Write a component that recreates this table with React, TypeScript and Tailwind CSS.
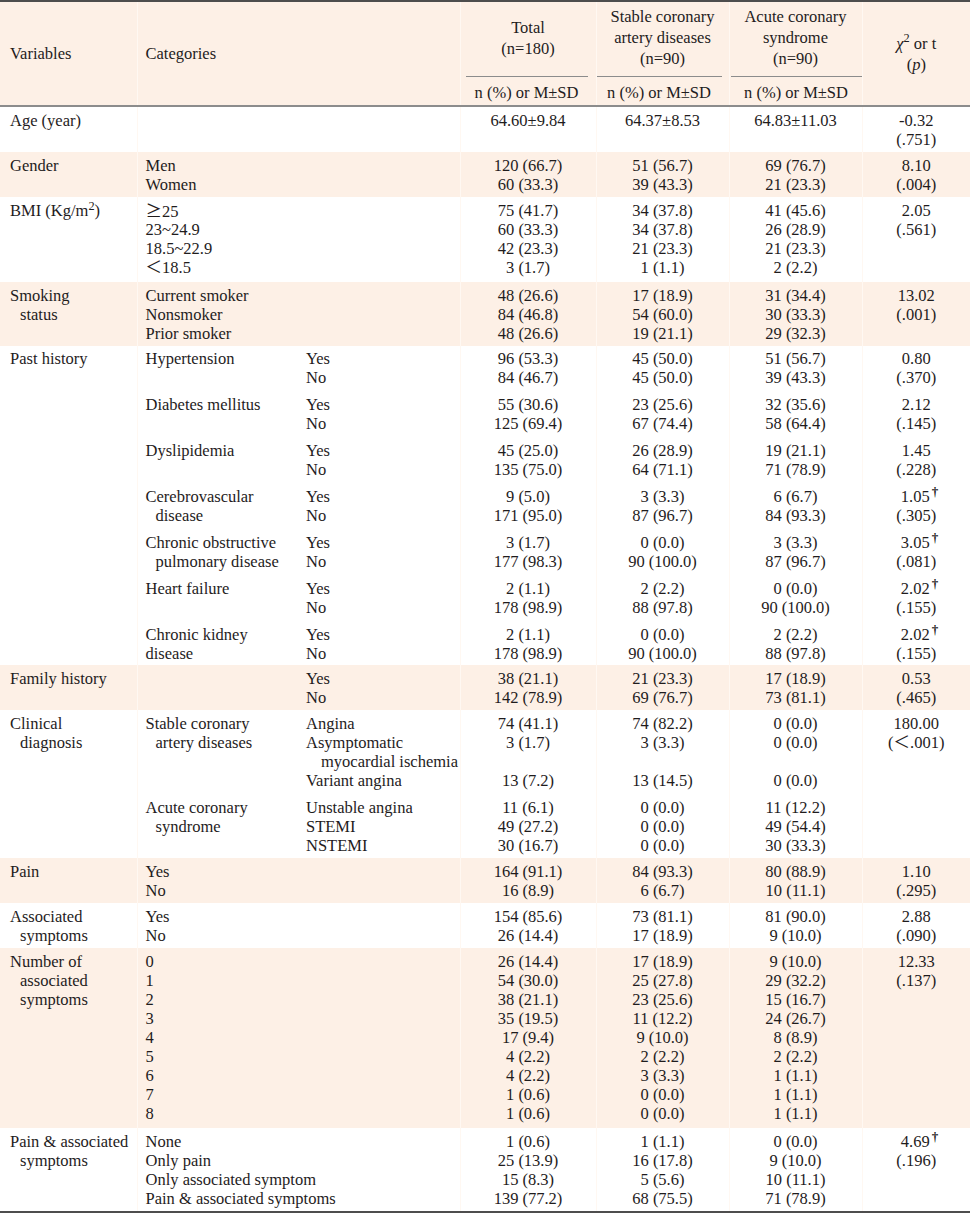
type Group = {
  c?: string[];
  s?: string[];
  t?: string[];
  a?: string[];
  b?: string[];
  p?: string[];
};

type Row = {
  shaded: boolean;
  pad?: 'tall' | 'tight';
  v: React.ReactNode[];
  groups: Group[];
};

const rows: Row[] = [
  {
    shaded: false,
    v: ['Age (year)'],
    groups: [{ t: ['64.60±9.84'], a: ['64.37±8.53'], b: ['64.83±11.03'], p: ['-0.32', '(.751)'] }],
  },
  {
    shaded: true,
    v: ['Gender'],
    groups: [
      {
        c: ['Men', 'Women'],
        t: ['120 (66.7)', '60 (33.3)'],
        a: ['51 (56.7)', '39 (43.3)'],
        b: ['69 (76.7)', '21 (23.3)'],
        p: ['8.10', '(.004)'],
      },
    ],
  },
  {
    shaded: false,
    pad: 'tall',
    v: [
      <span key="bmi">
        BMI (Kg/m<sup>2</sup>)
      </span>,
    ],
    groups: [
      {
        c: ['≥25', '23~24.9', '18.5~22.9', '＜18.5'],
        t: ['75 (41.7)', '60 (33.3)', '42 (23.3)', '3 (1.7)'],
        a: ['34 (37.8)', '34 (37.8)', '21 (23.3)', '1 (1.1)'],
        b: ['41 (45.6)', '26 (28.9)', '21 (23.3)', '2 (2.2)'],
        p: ['2.05', '(.561)'],
      },
    ],
  },
  {
    shaded: true,
    v: ['Smoking', '>status'],
    groups: [
      {
        c: ['Current smoker', 'Nonsmoker', 'Prior smoker'],
        t: ['48 (26.6)', '84 (46.8)', '48 (26.6)'],
        a: ['17 (18.9)', '54 (60.0)', '19 (21.1)'],
        b: ['31 (34.4)', '30 (33.3)', '29 (32.3)'],
        p: ['13.02', '(.001)'],
      },
    ],
  },
  {
    shaded: false,
    pad: 'tight',
    v: ['Past history'],
    groups: [
      {
        c: ['Hypertension'],
        s: ['Yes', 'No'],
        t: ['96 (53.3)', '84 (46.7)'],
        a: ['45 (50.0)', '45 (50.0)'],
        b: ['51 (56.7)', '39 (43.3)'],
        p: ['0.80', '(.370)'],
      },
      {
        c: ['Diabetes mellitus'],
        s: ['Yes', 'No'],
        t: ['55 (30.6)', '125 (69.4)'],
        a: ['23 (25.6)', '67 (74.4)'],
        b: ['32 (35.6)', '58 (64.4)'],
        p: ['2.12', '(.145)'],
      },
      {
        c: ['Dyslipidemia'],
        s: ['Yes', 'No'],
        t: ['45 (25.0)', '135 (75.0)'],
        a: ['26 (28.9)', '64 (71.1)'],
        b: ['19 (21.1)', '71 (78.9)'],
        p: ['1.45', '(.228)'],
      },
      {
        c: ['Cerebrovascular', '>disease'],
        s: ['Yes', 'No'],
        t: ['9 (5.0)', '171 (95.0)'],
        a: ['3 (3.3)', '87 (96.7)'],
        b: ['6 (6.7)', '84 (93.3)'],
        p: ['1.05†', '(.305)'],
      },
      {
        c: ['Chronic obstructive', '>pulmonary disease'],
        s: ['Yes', 'No'],
        t: ['3 (1.7)', '177 (98.3)'],
        a: ['0 (0.0)', '90 (100.0)'],
        b: ['3 (3.3)', '87 (96.7)'],
        p: ['3.05†', '(.081)'],
      },
      {
        c: ['Heart failure'],
        s: ['Yes', 'No'],
        t: ['2 (1.1)', '178 (98.9)'],
        a: ['2 (2.2)', '88 (97.8)'],
        b: ['0 (0.0)', '90 (100.0)'],
        p: ['2.02†', '(.155)'],
      },
      {
        c: ['Chronic kidney', 'disease'],
        s: ['Yes', 'No'],
        t: ['2 (1.1)', '178 (98.9)'],
        a: ['0 (0.0)', '90 (100.0)'],
        b: ['2 (2.2)', '88 (97.8)'],
        p: ['2.02†', '(.155)'],
      },
    ],
  },
  {
    shaded: true,
    v: ['Family history'],
    groups: [
      {
        s: ['Yes', 'No'],
        t: ['38 (21.1)', '142 (78.9)'],
        a: ['21 (23.3)', '69 (76.7)'],
        b: ['17 (18.9)', '73 (81.1)'],
        p: ['0.53', '(.465)'],
      },
    ],
  },
  {
    shaded: false,
    v: ['Clinical', '>diagnosis'],
    groups: [
      {
        c: ['Stable coronary', '>artery diseases'],
        s: ['Angina', 'Asymptomatic', '>>myocardial ischemia', 'Variant angina'],
        t: ['74 (41.1)', '3 (1.7)', '', '13 (7.2)'],
        a: ['74 (82.2)', '3 (3.3)', '', '13 (14.5)'],
        b: ['0 (0.0)', '0 (0.0)', '', '0 (0.0)'],
        p: ['180.00', '(＜.001)'],
      },
      {
        c: ['Acute coronary', '>syndrome'],
        s: ['Unstable angina', 'STEMI', 'NSTEMI'],
        t: ['11 (6.1)', '49 (27.2)', '30 (16.7)'],
        a: ['0 (0.0)', '0 (0.0)', '0 (0.0)'],
        b: ['11 (12.2)', '49 (54.4)', '30 (33.3)'],
      },
    ],
  },
  {
    shaded: true,
    v: ['Pain'],
    groups: [
      {
        c: ['Yes', 'No'],
        t: ['164 (91.1)', '16 (8.9)'],
        a: ['84 (93.3)', '6 (6.7)'],
        b: ['80 (88.9)', '10 (11.1)'],
        p: ['1.10', '(.295)'],
      },
    ],
  },
  {
    shaded: false,
    v: ['Associated', '>symptoms'],
    groups: [
      {
        c: ['Yes', 'No'],
        t: ['154 (85.6)', '26 (14.4)'],
        a: ['73 (81.1)', '17 (18.9)'],
        b: ['81 (90.0)', '9 (10.0)'],
        p: ['2.88', '(.090)'],
      },
    ],
  },
  {
    shaded: true,
    pad: 'tall',
    v: ['Number of', '>associated', '>symptoms'],
    groups: [
      {
        c: ['0', '1', '2', '3', '4', '5', '6', '7', '8'],
        t: ['26 (14.4)', '54 (30.0)', '38 (21.1)', '35 (19.5)', '17 (9.4)', '4 (2.2)', '4 (2.2)', '1 (0.6)', '1 (0.6)'],
        a: ['17 (18.9)', '25 (27.8)', '23 (25.6)', '11 (12.2)', '9 (10.0)', '2 (2.2)', '3 (3.3)', '0 (0.0)', '0 (0.0)'],
        b: ['9 (10.0)', '29 (32.2)', '15 (16.7)', '24 (26.7)', '8 (8.9)', '2 (2.2)', '1 (1.1)', '1 (1.1)', '1 (1.1)'],
        p: ['12.33', '(.137)'],
      },
    ],
  },
  {
    shaded: false,
    v: ['Pain & associated', '>symptoms'],
    groups: [
      {
        c: ['None', 'Only pain', 'Only associated symptom', 'Pain & associated symptoms'],
        t: ['1 (0.6)', '25 (13.9)', '15 (8.3)', '139 (77.2)'],
        a: ['1 (1.1)', '16 (17.8)', '5 (5.6)', '68 (75.5)'],
        b: ['0 (0.0)', '9 (10.0)', '10 (11.1)', '71 (78.9)'],
        p: ['4.69†', '(.196)'],
      },
    ],
  },
];

const groupSize = (g: Group) =>
  Math.max(g.c?.length ?? 0, g.s?.length ?? 0, g.t?.length ?? 0, g.a?.length ?? 0, g.b?.length ?? 0, g.p?.length ?? 0);

const Line = ({ text }: { text: React.ReactNode }) => {
  if (typeof text !== 'string') {
    return <div className="h-[19px] whitespace-nowrap">{text}</div>;
  }
  if (text.startsWith('>>')) {
    return <div className="h-[19px] whitespace-nowrap pl-[15px]">{text.slice(2)}</div>;
  }
  if (text.startsWith('>')) {
    return <div className="h-[19px] whitespace-nowrap pl-[10px]">{text.slice(1)}</div>;
  }
  if (text.startsWith('≥')) {
    return (
      <div className="h-[19px] whitespace-nowrap">
        <span className="font-['Noto_Sans_CJK_KR']">≥</span>
        {text.slice(1)}
      </div>
    );
  }
  if (text.endsWith('†')) {
    // dagger sits above the number without shifting its centre
    return (
      <div className="h-[19px] whitespace-nowrap">
        {text.slice(0, -1)}
        <span className="relative -top-[6px] inline-block w-0 pl-[2px] text-[13px] font-bold leading-none">†</span>
      </div>
    );
  }
  return <div className="h-[19px] whitespace-nowrap">{text || '\u00a0'}</div>;
};

const GroupCell = ({ groups, field }: { groups: Group[]; field: keyof Group }) => (
  <>
    {groups.map((g, gi) => {
      const n = groupSize(g);
      const lines = g[field] ?? [];
      return (
        <div key={gi} className={gi > 0 ? 'mt-[8px]' : ''}>
          {Array.from({ length: n }).map((_, i) => (
            <Line key={i} text={lines[i] ?? ''} />
          ))}
        </div>
      );
    })}
  </>
);

const sep = 'border-l border-[#fff8f2]';

const padFor = (pad?: 'tall' | 'tight') =>
  pad === 'tall' ? 'pt-[4px] pb-[5px]' : pad === 'tight' ? 'pt-[3px] pb-[2px]' : 'pt-[4px] pb-[3px]';

export default function App() {
  return (
    <div className="min-h-screen bg-white text-[#1f1c1d]" style={{ fontFamily: '"Liberation Serif", "Noto Sans CJK KR", serif' }}>
      <table className="w-[970px] table-fixed border-collapse border-t-2 border-b-2 border-[#4d4d4d] text-[16.5px] leading-[19px]">
        <colgroup>
          <col className="w-[137px]" />
          <col className="w-[161px]" />
          <col className="w-[162px]" />
          <col className="w-[136px]" />
          <col className="w-[133px]" />
          <col className="w-[133px]" />
          <col className="w-[108px]" />
        </colgroup>
        <thead className="border-b-2 border-[#8c8c8c] bg-[#fdf0e6]">
          <tr className="leading-[21px]">
            <th rowSpan={2} className="pl-[10px] text-left align-middle font-normal">
              Variables
            </th>
            <th rowSpan={2} colSpan={2} className={`pl-[8px] text-left align-middle font-normal ${sep}`}>
              Categories
            </th>
            <th className={`pt-[4px] pb-[7px] text-center align-middle font-normal ${sep}`}>
              <div>Total</div>
              <div>(n=180)</div>
            </th>
            <th className={`pt-[4px] pb-[7px] text-center align-middle font-normal ${sep}`}>
              <div>Stable coronary</div>
              <div>artery diseases</div>
              <div>(n=90)</div>
            </th>
            <th className={`pt-[4px] pb-[7px] text-center align-middle font-normal ${sep}`}>
              <div>Acute coronary</div>
              <div>syndrome</div>
              <div>(n=90)</div>
            </th>
            <th rowSpan={2} className={`text-center align-middle font-normal ${sep}`}>
              <div>
                <i>χ</i>
                <sup>2</sup> or t
              </div>
              <div>
                (<i>p</i>)
              </div>
            </th>
          </tr>
          <tr>
            <th className={`p-0 text-center font-normal ${sep}`}>
              <div className="ml-[5px] mr-[8px] border-t border-[#8c8c8c] pt-[6px] pb-[3px] whitespace-nowrap">n (%) or M±SD</div>
            </th>
            <th className={`p-0 text-center font-normal ${sep}`}>
              <div className="mr-[7px] border-t border-[#8c8c8c] pt-[6px] pb-[3px] whitespace-nowrap">n (%) or M±SD</div>
            </th>
            <th className={`p-0 text-center font-normal ${sep}`}>
              <div className="ml-[1px] border-t border-[#8c8c8c] pt-[6px] pb-[3px] whitespace-nowrap">n (%) or M±SD</div>
            </th>
          </tr>
        </thead>
        <tbody>
          {rows.map((row, ri) => {
            const pad = padFor(row.pad);
            return (
              <tr key={ri} className={row.shaded ? 'bg-[#fdf0e6]' : 'bg-white'}>
                <td className={`pl-[10px] align-top ${pad}`}>
                  {row.v.map((line, i) => (
                    <Line key={i} text={line} />
                  ))}
                </td>
                <td className={`pl-[8px] align-top ${pad} ${sep}`}>
                  <GroupCell groups={row.groups} field="c" />
                </td>
                <td className={`pl-[8px] align-top ${pad}`}>
                  <GroupCell groups={row.groups} field="s" />
                </td>
                <td className={`text-center align-top ${pad} ${sep}`}>
                  <GroupCell groups={row.groups} field="t" />
                </td>
                <td className={`text-center align-top ${pad} ${sep}`}>
                  <GroupCell groups={row.groups} field="a" />
                </td>
                <td className={`text-center align-top ${pad} ${sep}`}>
                  <GroupCell groups={row.groups} field="b" />
                </td>
                <td className={`text-center align-top ${pad} ${sep}`}>
                  <GroupCell groups={row.groups} field="p" />
                </td>
              </tr>
            );
          })}
        </tbody>
      </table>
    </div>
  );
}
